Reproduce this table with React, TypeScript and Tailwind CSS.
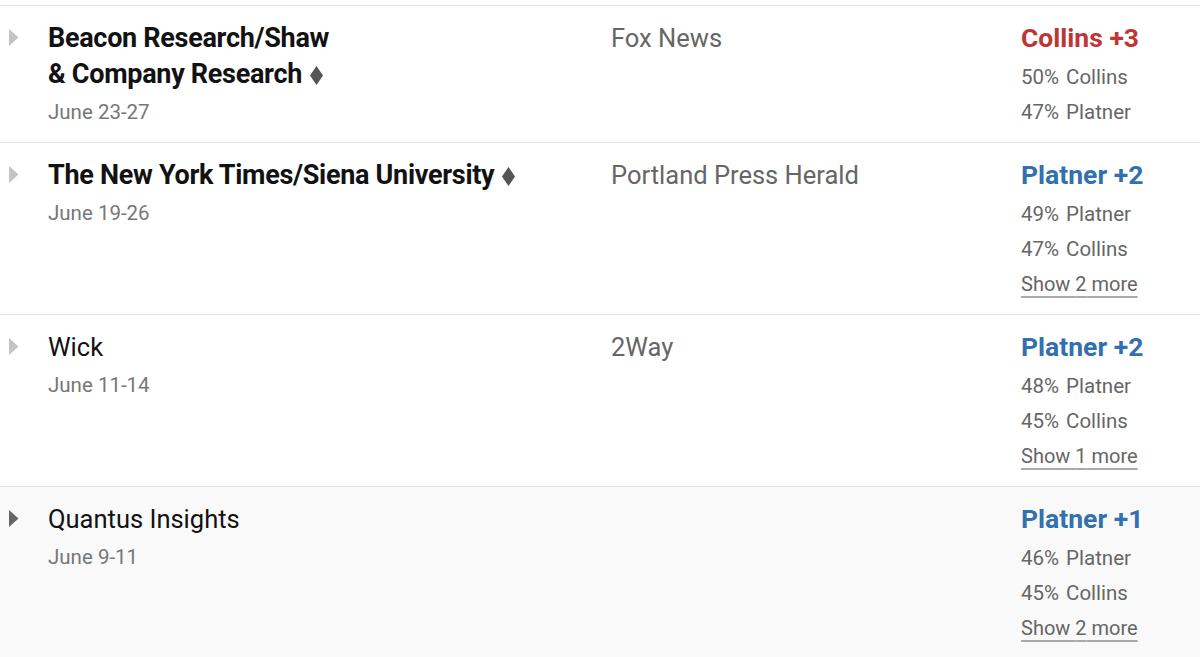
import React from 'react';

type Poll = {
  pollster: string[];
  select?: boolean;
  dates: string;
  sponsor?: string;
  leader: string;
  margin: string;
  party: 'red' | 'blue';
  results: [string, string][];
  more?: number;
  shaded?: boolean;
};

const polls: Poll[] = [
  {
    pollster: ['Beacon Research/Shaw', '& Company Research'],
    select: true,
    dates: 'June 23-27',
    sponsor: 'Fox News',
    leader: 'Collins',
    margin: '+3',
    party: 'red',
    results: [
      ['50%', 'Collins'],
      ['47%', 'Platner'],
    ],
  },
  {
    pollster: ['The New York Times/Siena University'],
    select: true,
    dates: 'June 19-26',
    sponsor: 'Portland Press Herald',
    leader: 'Platner',
    margin: '+2',
    party: 'blue',
    results: [
      ['49%', 'Platner'],
      ['47%', 'Collins'],
    ],
    more: 2,
  },
  {
    pollster: ['Wick'],
    dates: 'June 11-14',
    sponsor: '2Way',
    leader: 'Platner',
    margin: '+2',
    party: 'blue',
    results: [
      ['48%', 'Platner'],
      ['45%', 'Collins'],
    ],
    more: 1,
  },
  {
    pollster: ['Quantus Insights'],
    dates: 'June 9-11',
    leader: 'Platner',
    margin: '+1',
    party: 'blue',
    results: [
      ['46%', 'Platner'],
      ['45%', 'Collins'],
    ],
    more: 2,
    shaded: true,
  },
];

function Caret({ dark }: { dark?: boolean }) {
  return (
    <svg width="10" height="17" viewBox="0 0 10 17" className="mt-[9px] ml-[9px]">
      <path d="M0 0 L9.5 8.5 L0 17 Z" fill={dark ? '#666666' : '#c4c4c4'} />
    </svg>
  );
}

// "select pollster" marker
function Diamond() {
  return (
    <svg width="13" height="19" viewBox="0 0 13 19" className="inline-block ml-[8px] align-[-2px]">
      <path d="M6.5 0 L13 9.5 L6.5 19 L0 9.5 Z" fill="#555555" />
    </svg>
  );
}

function PollRow({ poll }: { poll: Poll }) {
  return (
    <div
      className={`grid grid-cols-[48px_563px_410px_1fr] border-b border-[#e2e2e2] pt-[14px] pb-[12px] ${
        poll.shaded ? 'bg-[#f9f9f9]' : 'bg-white'
      }`}
    >
      <div>
        <Caret dark={poll.shaded} />
      </div>
      <div>
        <div
          className={`leading-[36px] text-[#121212] ${
            poll.select ? 'text-[27px] font-bold tracking-[-0.3px]' : 'text-[25.5px] font-normal'
          }`}
        >
          {poll.pollster.map((line, i) => (
            <div key={i}>
              {line}
              {poll.select && i === poll.pollster.length - 1 && <Diamond />}
            </div>
          ))}
        </div>
        <div className="mt-[6px] text-[20.5px] leading-[28px] text-[#777777]">{poll.dates}</div>
      </div>
      <div className="text-[25.5px] leading-[36px] text-[#666666]">{poll.sponsor}</div>
      <div>
        <div
          className={`text-[26.5px] leading-[36px] font-bold ${
            poll.party === 'red' ? 'text-[#bf3535]' : 'text-[#3270b0]'
          }`}
        >
          {poll.leader} {poll.margin}
        </div>
        <div className="mt-[4px] text-[20.5px] leading-[35px] text-[#666666]">
          {poll.results.map(([pct, name]) => (
            <div key={name}>
              {pct}
              <span className="ml-[7px]">{name}</span>
            </div>
          ))}
          {poll.more && (
            <div className="text-[20px]">
              <span className="underline decoration-[#aaaaaa] decoration-[1.5px] underline-offset-[5px]">
                Show {poll.more} more
              </span>
            </div>
          )}
        </div>
      </div>
    </div>
  );
}

export default function App() {
  return (
    <div
      className="w-[1200px] h-[657px] overflow-hidden bg-white pt-[5px]"
      style={{ fontFamily: 'Roboto, "Liberation Sans", sans-serif' }}
    >
      <div className="border-t border-[#e2e2e2]">
        {polls.map((p, i) => (
          <PollRow key={i} poll={p} />
        ))}
      </div>
    </div>
  );
}
